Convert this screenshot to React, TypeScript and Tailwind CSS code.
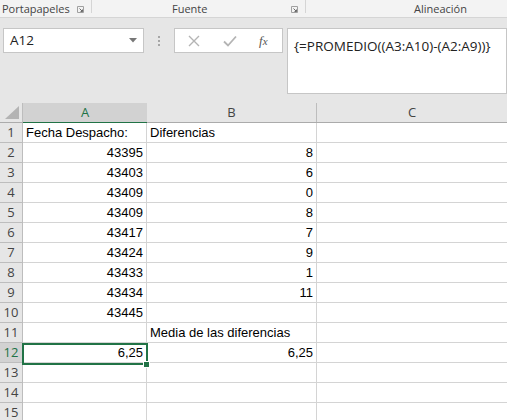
import React from "react";

const ui = { fontFamily: '"Open Sans", "Noto Sans", sans-serif' };
const cellFont = { fontFamily: '"Liberation Sans", Arial, sans-serif' };

const colA: (string | null)[] = [
  "Fecha Despacho:",
  "43395",
  "43403",
  "43409",
  "43409",
  "43417",
  "43424",
  "43433",
  "43434",
  "43445",
  null,
  "6,25",
  null,
  null,
  null,
];
const colB: (string | null)[] = [
  "Diferencias",
  "8",
  "6",
  "0",
  "8",
  "7",
  "9",
  "1",
  "11",
  null,
  "Media de las diferencias",
  "6,25",
  null,
  null,
  null,
];

function Launcher() {
  return (
    <svg width="7" height="7" viewBox="0 0 7 7">
      <path d="M0.5 0.5H6.5V6.5H0.5Z" fill="none" stroke="#a0a0a0" strokeWidth="1" />
      <path d="M2.5 2.5L5.5 5.5M5.5 3.5V5.5H3.5" fill="none" stroke="#6a6a6a" strokeWidth="1" />
    </svg>
  );
}

export default function App() {
  return (
    <div className="w-[507px] h-[420px] overflow-hidden bg-[#e6e6e6] text-[#262626]" style={ui}>
      {/* ribbon group labels */}
      <div className="h-[18px] flex bg-[#f3f3f3] border-b border-[#d5d5d5] text-[11px] text-[#444]">
        <div className="w-[91px] flex items-start pl-[2px] pr-[7px] pt-[1px]">
          <span className="leading-[15px]">Portapapeles</span>
          <span className="mt-[5px] ml-auto">
            <Launcher />
          </span>
        </div>
        <div className="w-px h-[13px] bg-[#d5d5d5]" />
        <div className="w-[213px] flex items-start pr-[7px] pt-[1px]">
          <span className="ml-[80px] leading-[15px]">Fuente</span>
          <span className="mt-[5px] ml-auto">
            <Launcher />
          </span>
        </div>
        <div className="w-px h-[13px] bg-[#d5d5d5]" />
        <div className="flex-1 pl-[108px] pt-[1px]">
          <span className="leading-[15px]">Alineación</span>
        </div>
      </div>

      {/* formula bar */}
      <div className="h-[85px] flex items-start pt-[10px]">
        <div className="ml-[3px] w-[141px] h-[25px] bg-white border border-[#c6c6c6] flex items-center pl-[6px] pr-[6px]">
          <span className="text-[13.5px] text-[#222]">A12</span>
          <svg width="8" height="5" viewBox="0 0 8 5" className="ml-auto">
            <path d="M0 0H8L4 4.5Z" fill="#777" />
          </svg>
        </div>
        <div className="w-[30px] h-[25px] flex flex-col items-center justify-center gap-[2px]">
          <div className="w-[2px] h-[2px] bg-[#a6a6a6]" />
          <div className="w-[2px] h-[2px] bg-[#a6a6a6]" />
          <div className="w-[2px] h-[2px] bg-[#a6a6a6]" />
        </div>
        <div className="w-[109px] h-[25px] bg-white border border-[#c6c6c6] flex items-center">
          <svg width="12" height="12" viewBox="0 0 12 12" className="ml-[13px]">
            <path d="M1 1L11 11M11 1L1 11" stroke="#b4b4b4" strokeWidth="1.4" />
          </svg>
          <svg width="14" height="12" viewBox="0 0 14 12" className="ml-[23px]">
            <path d="M1 6.5L5 10.5L13 1.5" fill="none" stroke="#b4b4b4" strokeWidth="1.8" />
          </svg>
          <span
            className="ml-[22px] text-[13px] italic text-[#555]"
            style={{ fontFamily: '"Liberation Serif", "DejaVu Serif", serif' }}
          >
            f<span className="text-[11px]">x</span>
          </span>
        </div>
        <div className="ml-[4px] flex-1 h-[66px] bg-white border border-[#c6c6c6] pl-[6px] pt-[4px]">
          <span className="text-[13.5px] text-[#222] whitespace-nowrap">{"{=PROMEDIO((A3:A10)-(A2:A9))}"}</span>
        </div>
      </div>

      {/* grid */}
      <div className="relative">
        {/* header row */}
        <div className="flex h-[20px] border-b border-[#ababab]">
          <div className="w-[23px] h-full border-r border-[#bdbdbd] relative">
            <svg width="14" height="13" viewBox="0 0 14 13" className="absolute right-[3px] bottom-[3px]">
              <path d="M14 0V13H0Z" fill="#b4b4b4" />
            </svg>
          </div>
          <div className="w-[124px] bg-[#d2d2d2] border-b-2 border-[#217346] flex items-center justify-center text-[13px] text-[#217346] -mb-px h-[21px]">
            A
          </div>
          <div className="w-[170px] h-full border-r border-[#bdbdbd] flex items-center justify-center text-[13px] text-[#444]">
            B
          </div>
          <div className="flex-1 h-full flex items-center justify-center text-[13px] text-[#444]">C</div>
        </div>

        {/* data rows */}
        {colA.map((a, i) => {
          const sel = i === 11;
          const b = colB[i];
          const aNum = a !== null && i > 0;
          const bNum = b !== null && i > 0 && i !== 10;
          return (
            <div key={i} className="flex h-[20px]">
              <div
                className={
                  "w-[23px] h-full border-r border-b flex items-center justify-center text-[13px] " +
                  (sel
                    ? "bg-[#d2d2d2] text-[#217346] border-r-[#217346] border-b-[#bdbdbd]"
                    : "bg-[#e6e6e6] text-[#444] border-[#bdbdbd]")
                }
              >
                {i + 1}
              </div>
              <div
                className={
                  "w-[124px] h-full bg-white border-r border-b border-[#d4d4d4] flex items-center px-[3px] text-[13px] text-black whitespace-nowrap " +
                  (aNum ? "justify-end" : "justify-start")
                }
                style={cellFont}
              >
                {a}
              </div>
              <div
                className={
                  "w-[170px] h-full bg-white border-r border-b border-[#d4d4d4] flex items-center px-[3px] text-[13px] text-black whitespace-nowrap " +
                  (bNum ? "justify-end" : "justify-start")
                }
                style={cellFont}
              >
                {b}
              </div>
              <div className="flex-1 h-full bg-white border-b border-[#d4d4d4]" />
            </div>
          );
        })}

        {/* selection box A12 */}
        <div className="absolute left-[22px] top-[240px] w-[126px] h-[22px] border-2 border-[#217346] pointer-events-none" />
        <div className="absolute left-[143px] top-[258px] w-[7px] h-[7px] bg-[#217346] border border-white" />
      </div>
    </div>
  );
}
